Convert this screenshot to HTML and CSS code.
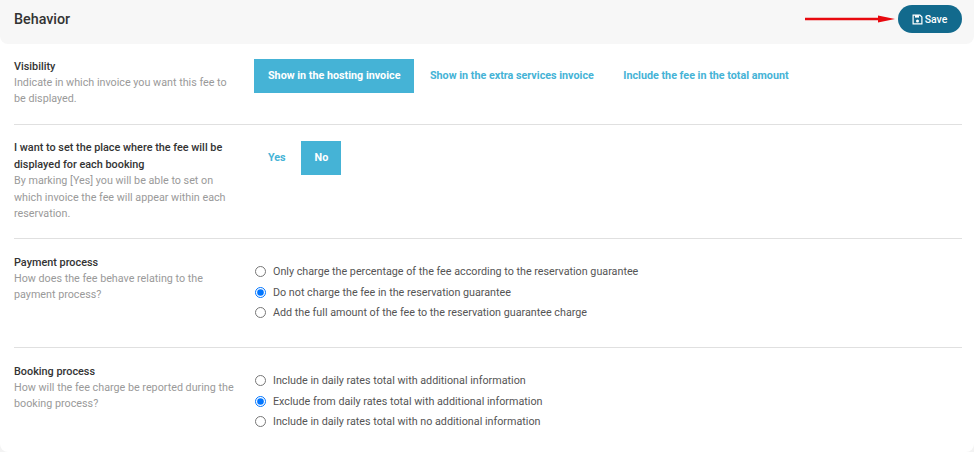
FILE: index.html
```html
<!DOCTYPE html>
<html lang="en">
<head>
<meta charset="utf-8">
<title>Behavior</title>
<link rel="stylesheet" href="styles.css">
</head>
<body>
<main class="card">
  <header class="head">
    <h1 class="title">Behavior</h1>
    <div class="head-actions">
      <svg class="arrow" width="91" height="8" viewBox="0 0 91 8"><path d="M0 4h76" stroke="#e8090f" stroke-width="2.6"/><path d="M73 0.5L90 4L73 7.5z" fill="#e8090f"/></svg>
      <button class="save" type="button">
        <svg class="save-icon" width="11" height="11" viewBox="0 0 11 11"><path fill="none" stroke="#fff" stroke-width="1.2" d="M1.1 1.1h6.8l2 2v6.8H1.1z"/><path fill="#fff" d="M3 1.2h4v2.4H3z"/><circle cx="5.5" cy="7" r="1.5" fill="#fff"/></svg>
        Save
      </button>
    </div>
  </header>

  <section class="row row-visibility">
    <div class="info">
      <h2 class="label">Visibility</h2>
      <p class="hint">Indicate in which invoice you want this fee to be displayed.</p>
    </div>
    <div class="tabs">
      <span class="tab tab-wide active">Show in the hosting invoice</span>
      <span class="tab tab-wide">Show in the extra services invoice</span>
      <span class="tab tab-wide">Include the fee in the total amount</span>
    </div>
  </section>

  <section class="row row-place">
    <div class="info">
      <h2 class="label">I want to set the place where the fee will be displayed for each booking</h2>
      <p class="hint">By marking [Yes] you will be able to set on which invoice the fee will appear within each reservation.</p>
    </div>
    <div class="tabs">
      <span class="tab tab-small">Yes</span>
      <span class="tab tab-small active">No</span>
    </div>
  </section>

  <section class="row row-payment">
    <div class="info">
      <h2 class="label">Payment process</h2>
      <p class="hint">How does the fee behave relating to the payment process?</p>
    </div>
    <div class="radios">
      <label class="radio"><input type="radio" name="payment">Only charge the percentage of the fee according to the reservation guarantee</label>
      <label class="radio"><input type="radio" name="payment" checked>Do not charge the fee in the reservation guarantee</label>
      <label class="radio"><input type="radio" name="payment">Add the full amount of the fee to the reservation guarantee charge</label>
    </div>
  </section>

  <section class="row row-booking">
    <div class="info">
      <h2 class="label">Booking process</h2>
      <p class="hint">How will the fee charge be reported during the booking process?</p>
    </div>
    <div class="radios">
      <label class="radio"><input type="radio" name="booking">Include in daily rates total with additional information</label>
      <label class="radio"><input type="radio" name="booking" checked>Exclude from daily rates total with additional information</label>
      <label class="radio"><input type="radio" name="booking">Include in daily rates total with no additional information</label>
    </div>
  </section>
</main>
</body>
</html>
```
FILE: styles.css
```css
* { box-sizing: border-box; }
html, body { margin: 0; padding: 0; }
body {
  width: 974px;
  height: 452px;
  overflow: hidden;
  background: #f3f3f3;
  font-family: Roboto, "Liberation Sans", sans-serif;
  color: #333;
}
.card {
  height: 452px;
  background: #fff;
  border-radius: 8px;
}
.head {
  height: 44px;
  padding: 0 12px 6px 14px;
  display: flex;
  align-items: center;
  justify-content: space-between;
  background: #f7f7f7;
  border-radius: 0 0 8px 8px;
}
.title {
  margin: 0;
  font-size: 14.3px;
  font-weight: 500;
  color: #333;
}
.head-actions { display: flex; align-items: center; gap: 2px; }
.arrow { display: block; }
.save {
  width: 64px;
  height: 28px;
  display: flex;
  align-items: center;
  justify-content: center;
  gap: 2px;
  padding: 0 1px 0 0;
  border: 0;
  border-radius: 14px;
  background: #126a8d;
  color: #fff;
  font: 500 10.5px Roboto, sans-serif;
}
.row {
  margin: 0 12px 0 14px;
  display: flex;
  border-bottom: 1px solid #e0e0e0;
}
.row-visibility { height: 81px; padding-top: 15px; }
.row-place { height: 114px; padding-top: 15px; }
.row-payment { height: 109px; padding-top: 16px; }
.row-booking { height: 100px; padding-top: 16px; border-bottom: 0; }
.info { width: 240px; flex: none; }
.label {
  margin: 0;
  font-size: 10.85px;
  line-height: 16px;
  font-weight: 500;
  color: #333;
}
.row-place .info { width: 220px; margin-right: 20px; }
.row-place .label, .row-place .hint { line-height: 16.5px; }
.hint {
  margin: 0;
  font-size: 10.75px;
  line-height: 16px;
  color: #9a9a9a;
}
.row-visibility .info { padding-right: 20px; }
.row-payment .info { padding-right: 20px; }
.tabs { display: flex; gap: 1.5px; align-self: flex-start; }
.row-place .tabs { margin-top: 1px; gap: 2.5px; }
.tab {
  height: 34px;
  display: flex;
  align-items: center;
  padding-bottom: 1px;
  font-size: 10.75px;
  font-weight: 700;
  color: #45b3d6;
}
.tab-wide { padding-left: 14px; padding-right: 14px; }
.tab-small { padding-left: 14px; padding-right: 13px; }
.tab-small.active { padding-left: 13.4px; padding-right: 13px; width: 40px; }
.tab.active { background: #45b3d6; color: #fff; }
.radios { display: flex; flex-direction: column; gap: 4.5px; }
.row-payment .radios { padding-top: 8.8px; }
.row-booking .radios { padding-top: 8.8px; }
.radio {
  height: 16px;
  display: flex;
  align-items: center;
  font-size: 10.75px;
  color: #555;
}
.radio input { width: 11px; height: 11px; margin: 0 7.5px 0 0.5px; }
```
